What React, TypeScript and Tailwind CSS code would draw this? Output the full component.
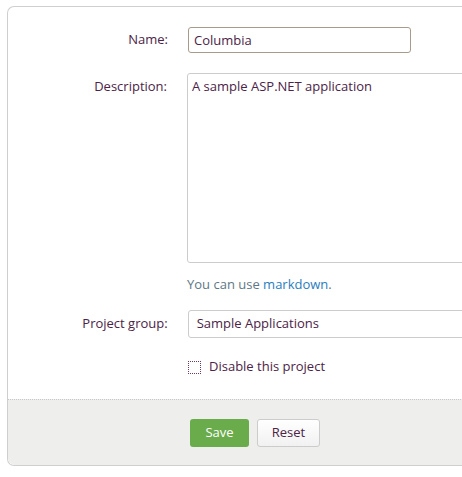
export default function App() {
  return (
    <div className="h-[477px] w-[462px] overflow-hidden bg-white pl-[7px] pt-[6px] font-['Open_Sans',sans-serif] text-[13px] text-[#4b2347]">
      <div className="w-[480px] rounded-l-[7px] border border-r-0 border-[#cfcfcf] bg-white">
        <div className="flex flex-col pb-[22px] pt-[20px]">
          {/* Name */}
          <div className="flex items-center">
            <label className="w-[180px] pr-[20px] text-right">Name:</label>
            <input
              readOnly
              value="Columbia"
              className="h-[26px] w-[223px] rounded-[3px] border border-[#a99a8c] px-[5px] text-[#4b2347] outline-none"
            />
          </div>

          {/* Description */}
          <div className="mt-[20px] flex items-start">
            <label className="w-[180px] pr-[20px] pt-[4px] text-right">Description:</label>
            <div className="flex flex-col">
              <textarea
                readOnly
                value="A sample ASP.NET application"
                className="h-[190px] w-[300px] resize-none rounded-[3px] border border-[#cccccc] px-[4px] py-[3px] text-[#4b2347] outline-none"
              />
              <p className="mt-[11px] leading-[20px] text-[#5e7785]">
                You can use <a className="text-[#2a7dc0]">markdown</a>.
              </p>
            </div>
          </div>

          {/* Project group */}
          <div className="mt-[16px] flex items-center">
            <label className="w-[180px] pr-[20px] text-right">Project group:</label>
            <div className="flex h-[28px] w-[300px] items-center rounded-[3px] border border-[#cccccc] px-[8px]">
              Sample Applications
            </div>
          </div>

          {/* Checkbox */}
          <div className="mt-[19px] flex h-[20px] items-center pl-[180px]">
            <span className="h-[13px] w-[13px] border border-dotted border-[#6b3a5e]" />
            <span className="ml-[8px]">Disable this project</span>
          </div>
        </div>

        {/* Footer */}
        <div className="flex gap-[8px] rounded-bl-[7px] border-t border-dotted border-[#c8c8c8] bg-[#eeeeec] pb-[18px] pl-[182px] pt-[19px]">
          <button className="h-[28px] w-[59px] rounded-[3px] bg-[#6aac4b] text-white">Save</button>
          <button className="h-[28px] w-[63px] rounded-[3px] border border-[#cccccc] bg-gradient-to-b from-white to-[#f1f1f1] text-[#4b2347]">
            Reset
          </button>
        </div>
      </div>
    </div>
  )
}
